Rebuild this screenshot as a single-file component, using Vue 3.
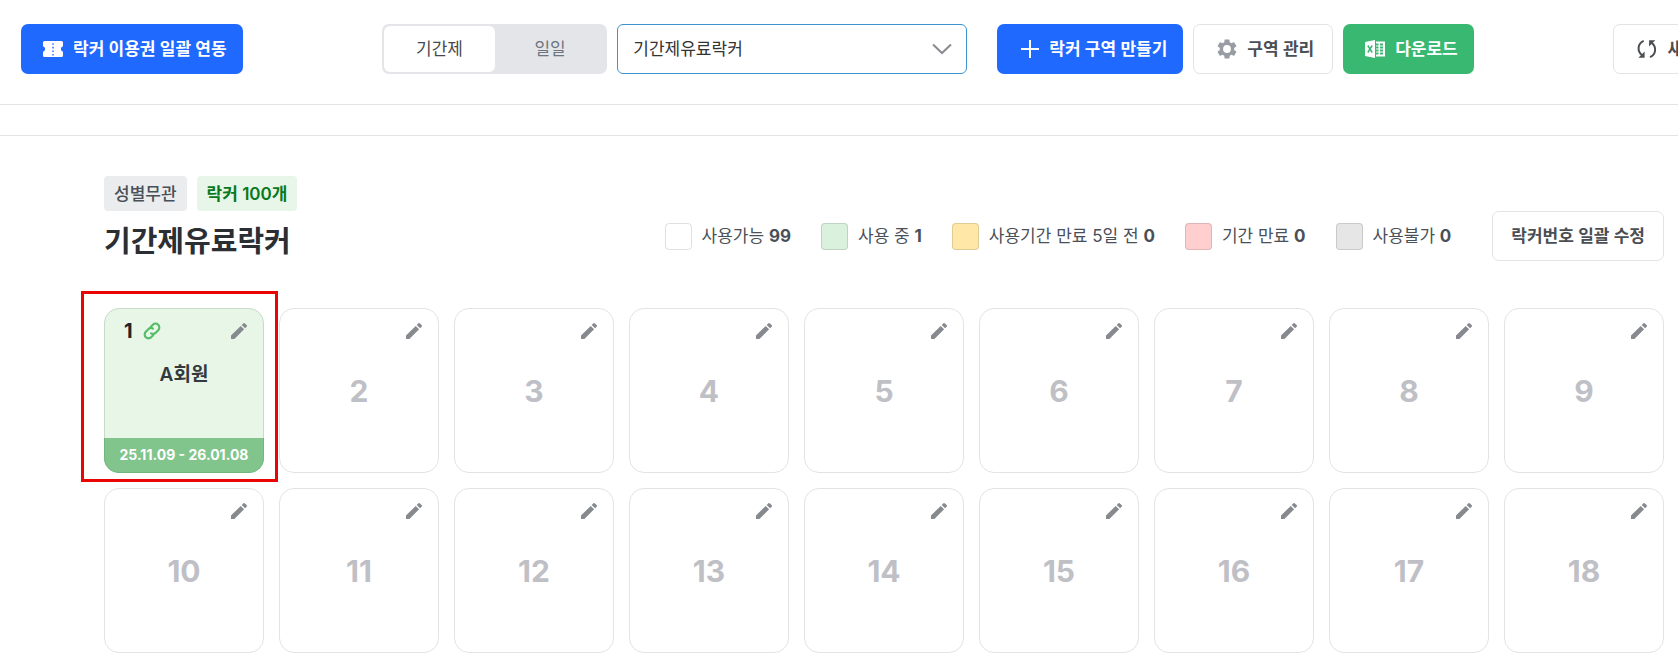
<script setup>
import { ref } from 'vue'

const term = ref('period')
const zone = ref('기간제유료락커')

const legend = [
  { key: 'free', label: '사용가능', count: 99 },
  { key: 'used', label: '사용 중', count: 1 },
  { key: 'soon', label: '사용기간 만료 5일 전', count: 0 },
  { key: 'expired', label: '기간 만료', count: 0 },
  { key: 'blocked', label: '사용불가', count: 0 },
]

const lockers = Array.from({ length: 18 }, (_, i) => ({ no: i + 1 }))
lockers[0].member = 'A회원'
lockers[0].period = '25.11.09 - 26.01.08'
</script>

<template>
  <div class="page">
    <header class="toolbar">
      <div class="toolbar-row">
        <button type="button" class="btn btn-blue">
          <svg class="icon" viewBox="0 0 24 24" aria-hidden="true">
            <path fill="currentColor" d="M3.500 4h17A1.500 1.500 0 0 1 22 5.500V9.200a2.900 2.900 0 0 0 0 5.600V18.500A1.500 1.500 0 0 1 20.500 20h-17A1.500 1.500 0 0 1 2 18.500V14.800a2.900 2.900 0 0 0 0-5.600V5.500A1.500 1.500 0 0 1 3.500 4z" />
            <path stroke="#1f69ff" stroke-width="1.400" stroke-dasharray="1.600 2" d="M12 6.200v13" />
          </svg>
          락커 이용권 일괄 연동
        </button>

        <div class="center">
          <div class="segment">
            <button type="button" class="seg" :class="{ on: term === 'period' }" @click="term = 'period'">기간제</button>
            <button type="button" class="seg" :class="{ on: term === 'day' }" @click="term = 'day'">일일</button>
          </div>
          <div class="select-wrap">
            <select v-model="zone" class="select" aria-label="락커 구역">
              <option>기간제유료락커</option>
            </select>
            <svg class="chevron" viewBox="0 0 20 12" aria-hidden="true">
              <path fill="none" stroke="#888b90" stroke-width="2" d="M1 1.500l9 8.500 9-8.500" />
            </svg>
          </div>
          <div class="actions">
            <button type="button" class="btn btn-blue">
              <svg class="icon" viewBox="0 0 24 24" aria-hidden="true">
                <path fill="none" stroke="currentColor" stroke-width="2" d="M13 3v18M4 12h18" />
              </svg>
              락커 구역 만들기
            </button>
            <button type="button" class="btn btn-line">
              <svg class="icon gear" viewBox="0 0 24 24" aria-hidden="true">
                <path fill="currentColor" d="M19.140 12.940c.04-.3.06-.61.06-.94 0-.32-.02-.64-.07-.94l2.030-1.580a.49.49 0 0 0 .12-.61l-1.920-3.320a.488.488 0 0 0-.59-.22l-2.390.96c-.5-.38-1.030-.7-1.620-.94l-.36-2.540a.484.484 0 0 0-.48-.41h-3.840c-.24 0-.43.17-.47.41l-.36 2.540c-.59.24-1.130.57-1.620.94l-2.390-.96c-.22-.08-.47 0-.59.22L2.740 8.870c-.12.21-.08.47.12.61l2.030 1.580c-.05.3-.09.63-.09.94s.02.64.07.94l-2.030 1.580a.49.49 0 0 0-.12.61l1.920 3.320c.12.22.37.29.59.22l2.390-.96c.5.38 1.030.7 1.620.94l.36 2.540c.05.24.24.41.48.41h3.840c.24 0 .44-.17.47-.41l.36-2.540c.59-.24 1.130-.56 1.620-.94l2.390.96c.22.08.47 0 .59-.22l1.920-3.320c.12-.22.07-.47-.12-.61l-2.010-1.580zM12 15.900a3.900 3.900 0 1 1 0-7.800 3.900 3.900 0 0 1 0 7.800z" />
              </svg>
              구역 관리
            </button>
            <button type="button" class="btn btn-green">
              <svg class="icon" viewBox="0 0 24 24" aria-hidden="true">
                <path fill="currentColor" d="M2 5l10-2v18L2 19zM13 4.500h9v15h-9z" />
                <path fill="none" stroke="#38b871" stroke-width="1.500" d="M4.800 8.500l4.400 7M9.200 8.500l-4.400 7" />
                <path fill="#38b871" d="M13 6.500h2.500v2H13zM17 6.500h3v2h-3zM13 9.500h2.500v2H13zM17 9.500h3v2h-3zM13 12.500h2.500v2H13zM17 12.500h3v2h-3zM13 15.500h2.500v2H13zM17 15.500h3v2h-3z" />
              </svg>
              다운로드
            </button>
          </div>
        </div>

        <button type="button" class="btn btn-line">
          <svg class="icon" viewBox="0 0 24 24" aria-hidden="true">
            <g fill="none" stroke="currentColor" stroke-width="2">
              <path d="M8.700 3.800C2.500 6.500 2 14 6.800 18" />
              <path d="M15 20.200C21.200 17.500 21.700 10 16.900 6" />
            </g>
            <path fill="currentColor" d="M9.600 14.500v6.200H3.400zM14.100 9.500V3.300h6.200z" />
          </svg>
          새로고침
        </button>
      </div>
    </header>
    <div class="strip"></div>

    <main class="content">
      <div class="zone-head">
        <div class="zone-title">
          <div class="tags">
            <span class="tag">성별무관</span>
            <span class="tag tag-green">락커 100개</span>
          </div>
          <h1>기간제유료락커</h1>
        </div>
        <div class="zone-side">
          <ul class="legend">
            <li v-for="l in legend" :key="l.key">
              <i class="swatch" :class="l.key"></i>
              <span>{{ l.label }} <b>{{ l.count }}</b></span>
            </li>
          </ul>
          <button type="button" class="btn btn-line btn-text">락커번호 일괄 수정</button>
        </div>
      </div>

      <div class="lockers">
        <article v-for="l in lockers" :key="l.no" class="locker" :class="{ used: l.member }">
          <div class="locker-top">
            <template v-if="l.member">
              <span class="small-no">{{ l.no }}</span>
              <svg class="link" viewBox="0 0 20 20" aria-hidden="true">
                <g fill="none" stroke="#55bd68" stroke-width="2.400" stroke-linecap="round">
                  <path d="M8.800 5.200l2.100-2.100a4.200 4.200 0 0 1 6 6l-3 3a4.200 4.200 0 0 1-5 .6" />
                  <path d="M11.200 14.800l-2.100 2.100a4.200 4.200 0 0 1-6-6l3-3a4.200 4.200 0 0 1 5-.6" />
                </g>
              </svg>
            </template>
            <button type="button" class="edit" :aria-label="l.no + '번 락커 수정'">
              <svg viewBox="0 0 16 16" aria-hidden="true">
                <path fill="currentColor" d="M0 12.600L9.700 2.900l3.400 3.400L3.400 16H.6a.6.6 0 0 1-.6-.6zM10.700 1.900L12.200.4a1.200 1.200 0 0 1 1.700 0l1.700 1.700a1.200 1.200 0 0 1 0 1.700l-1.500 1.500z" />
              </svg>
            </button>
          </div>
          <template v-if="l.member">
            <strong class="member">{{ l.member }}</strong>
            <div class="period">{{ l.period }}</div>
            <div class="highlight"></div>
          </template>
          <span v-else class="big-no">{{ l.no }}</span>
        </article>
      </div>
    </main>
  </div>
</template>

<style>
body {
  margin: 0;
  background: #fff;
}
</style>

<style scoped>
* {
  box-sizing: border-box;
}
.page {
  overflow: hidden;
  font-family: Inter, "Noto Sans CJK KR", sans-serif;
  font-size: 17px;
  line-height: 24px;
  color: #495057;
}
button,
select {
  font: inherit;
  color: inherit;
  margin: 0;
  cursor: pointer;
}
.toolbar {
  padding: 24px 0 30px 21px;
  border-bottom: 1px solid #e4e4e5;
}
/* the row runs past the right edge of the window */
.toolbar-row {
  display: flex;
  justify-content: space-between;
  margin-right: -71px;
}
.strip {
  height: 31px;
  border-bottom: 1px solid #e4e4e5;
}
.btn {
  display: flex;
  align-items: center;
  gap: 8px;
  height: 50px;
  padding: 0 15px 0 19px;
  border: 1px solid transparent;
  border-radius: 7px;
  font-weight: 600;
  white-space: nowrap;
}
.btn-blue {
  background: #1f69ff;
  color: #fff;
}
.btn-green {
  background: #38b871;
  color: #fff;
}
.btn-line {
  padding: 0 18px 0 21px;
  background: #fff;
  border-color: #e2e3e5;
  color: #4b4e53;
}
.btn-text {
  padding: 0 18px;
}
.icon {
  flex: none;
  width: 24px;
  height: 24px;
}
.gear {
  color: #989da3;
}
.center {
  display: flex;
  gap: 10px;
}
.segment {
  display: flex;
  width: 225px;
  padding: 2px;
  border-radius: 7px;
  background: #e4e5e9;
}
.seg {
  flex: 1;
  padding: 0;
  border: 0;
  border-radius: 6px;
  background: transparent;
  color: #6d7480;
}
.seg.on {
  background: #fff;
  color: #46494d;
}
.select-wrap {
  position: relative;
  width: 350px;
}
.select {
  width: 100%;
  height: 50px;
  padding: 0 48px 0 15px;
  border: 1px solid #3d94cf;
  border-radius: 6px;
  background: #fff;
  color: #333;
  appearance: none;
  outline: 0;
}
.chevron {
  position: absolute;
  top: 19px;
  right: 15px;
  width: 20px;
  height: 12px;
  pointer-events: none;
}
.actions {
  display: flex;
  gap: 10px;
  margin-left: 20px;
}
.content {
  padding: 40px 14px 8px 104px;
}
.zone-head {
  display: flex;
  justify-content: space-between;
  margin-bottom: 47px;
}
.tags {
  display: flex;
  gap: 10px;
}
.tag {
  height: 35px;
  padding: 0 10px;
  border-radius: 4px;
  background: #ebecee;
  line-height: 36px;
  font-weight: 500;
}
.tag-green {
  background: #e7f6e8;
  color: #08791c;
  font-weight: 600;
}
h1 {
  margin: 12px 0 0;
  font-size: 29px;
  line-height: 38px;
  font-weight: 700;
  color: #2b2e33;
}
.zone-side {
  display: flex;
  align-items: center;
  align-self: flex-end;
  gap: 41px;
}
.legend {
  display: flex;
  gap: 30px;
  margin: 0;
  padding: 0;
  list-style: none;
}
.legend li {
  display: flex;
  align-items: center;
  gap: 10px;
  white-space: nowrap;
}
.legend b {
  font-weight: 700;
}
.swatch {
  width: 27px;
  height: 27px;
  border: 1px solid rgba(0, 0, 0, 0.12);
  border-radius: 4px;
}
.used.swatch {
  background: #daf1de;
}
.soon {
  background: #ffe7a8;
}
.expired {
  background: #ffcfcf;
}
.blocked {
  background: #e6e6e6;
}
.lockers {
  display: grid;
  grid-template-columns: repeat(9, 1fr);
  gap: 15px;
}
.locker {
  position: relative;
  display: flex;
  flex-direction: column;
  align-items: center;
  height: 165px;
  border: 1px solid #e2e3e4;
  border-radius: 15px;
  background: #fff;
}
.locker.used {
  border-color: #c6dcc9;
  background: #e8f6e8;
}
.locker-top {
  display: flex;
  align-items: center;
  align-self: stretch;
  gap: 10px;
  height: 44px;
  padding: 0 16px 0 19px;
}
.small-no {
  font-size: 20px;
  font-weight: 700;
  color: #222528;
}
.link {
  width: 18px;
  height: 18px;
}
.edit {
  display: flex;
  margin-left: auto;
  padding: 0;
  border: 0;
  background: none;
  color: #868a8f;
}
.edit svg {
  width: 16px;
  height: 16px;
}
.big-no {
  margin-top: 18px;
  font-size: 30px;
  line-height: 40px;
  font-weight: 700;
  color: #bfc0c6;
}
.member {
  margin-top: 9px;
  font-size: 19px;
  line-height: 26px;
  font-weight: 600;
  color: #34393e;
}
.period {
  align-self: stretch;
  height: 35px;
  margin: auto -1px -1px;
  border: 1px solid #72b67d;
  border-top: 0;
  border-radius: 0 0 15px 15px;
  background: #81c58c;
  color: #fff;
  font-size: 14px;
  line-height: 34px;
  font-weight: 700;
  text-align: center;
}
.highlight {
  position: absolute;
  inset: -18px -15px -10px -24px;
  border: 3px solid #ea0505;
  pointer-events: none;
}
</style>
